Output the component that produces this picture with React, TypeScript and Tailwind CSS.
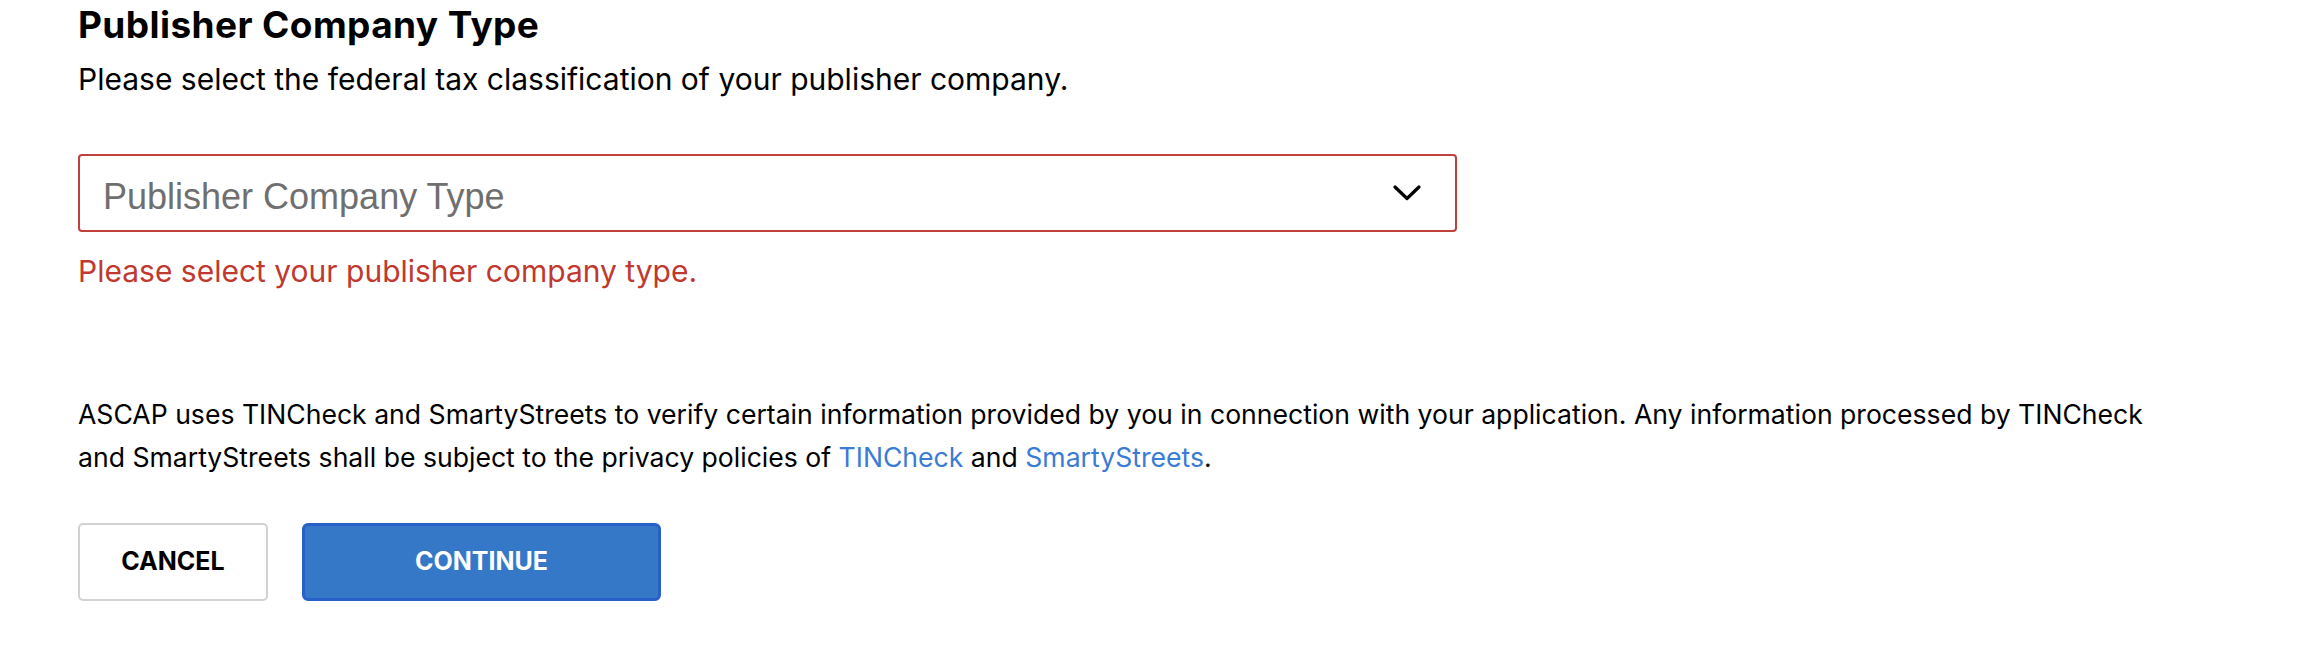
export default function App() {
  return (
    <div className="min-h-screen bg-white pl-[78px] pt-[3px] text-black" style={{ fontFamily: "Inter, 'Liberation Sans', sans-serif" }}>
      <h1 className="text-[37px] font-bold leading-[44px] tracking-[0.4px]">Publisher Company Type</h1>
      <p className="mt-[12px] text-[30px] leading-[40px]">
        Please select the federal tax classification of your publisher company.
      </p>

      <div className="mt-[55px] flex h-[78px] w-[1379px] items-center justify-between rounded-[4px] border-2 border-[#c0403a] pl-[23px] pr-[34px] pt-[7px]">
        <span className="text-[36px] text-[#6f6f6f]" style={{ fontFamily: "'Liberation Sans', Arial, sans-serif" }}>
          Publisher Company Type
        </span>
        <svg width="28" height="16" viewBox="0 0 28 16" fill="none" className="-mt-[7px]">
          <polyline points="2,2 14,13.5 26,2" stroke="#000" strokeWidth="3.2" strokeLinecap="round" strokeLinejoin="round" />
        </svg>
      </div>
      <p className="mt-[19px] text-[30px] leading-[40px] text-[#c0392f]">Please select your publisher company type.</p>

      <p className="mt-[102px] w-[2100px] text-[26.6px] leading-[43px]">
        ASCAP uses TINCheck and SmartyStreets to verify certain information provided by you in connection with your
        application. Any information processed by TINCheck and SmartyStreets shall be subject to the privacy policies of{" "}
        <a className="text-[#3a7bd5]">TINCheck</a> and <a className="text-[#3a7bd5]">SmartyStreets</a>.
      </p>

      <div className="mt-[44px] flex gap-[34px]">
        <button className="h-[78px] w-[190px] rounded-[5px] border-2 border-[#d2d2d2] bg-white text-[25px] font-bold">
          CANCEL
        </button>
        <button className="h-[78px] w-[359px] rounded-[6px] border-[3px] border-[#285fc8] bg-[#3678c8] text-[25px] font-bold text-white">
          CONTINUE
        </button>
      </div>
    </div>
  );
}
